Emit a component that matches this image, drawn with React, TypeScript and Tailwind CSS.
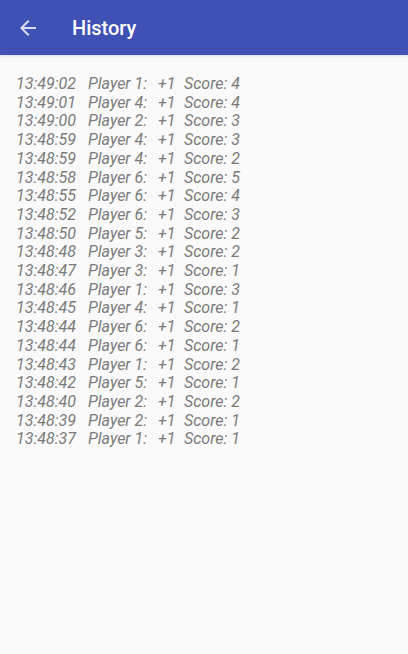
const rows: [string, number, number][] = [
  ["13:49:02", 1, 4],
  ["13:49:01", 4, 4],
  ["13:49:00", 2, 3],
  ["13:48:59", 4, 3],
  ["13:48:59", 4, 2],
  ["13:48:58", 6, 5],
  ["13:48:55", 6, 4],
  ["13:48:52", 6, 3],
  ["13:48:50", 5, 2],
  ["13:48:48", 3, 2],
  ["13:48:47", 3, 1],
  ["13:48:46", 1, 3],
  ["13:48:45", 4, 1],
  ["13:48:44", 6, 2],
  ["13:48:44", 6, 1],
  ["13:48:43", 1, 2],
  ["13:48:42", 5, 1],
  ["13:48:40", 2, 2],
  ["13:48:39", 2, 1],
  ["13:48:37", 1, 1],
];

export default function App() {
  return (
    <div className="flex h-[654px] w-[408px] flex-col bg-[#fafafa] font-['Roboto',sans-serif]">
      <header className="flex h-[55px] shrink-0 items-center bg-[#3f51b5] px-4 shadow-sm">
        <svg width="24" height="24" viewBox="0 0 24 24" className="fill-white/80">
          <path d="M20 11H7.83l5.59-5.59L12 4l-8 8 8 8 1.41-1.41L7.83 13H20v-2z" />
        </svg>
        <h1 className="ml-8 text-[20px] font-medium text-white">History</h1>
      </header>
      <main className="px-4 pt-[20px]">
        {rows.map(([time, player, score], i) => (
          <div key={i} className="flex text-base italic leading-[18.7px] text-[#7a7a7a]">
            <span className="w-[72px]">{time}</span>
            <span className="w-[70px]">Player {player}:</span>
            <span className="w-[26px]">+1</span>
            <span>Score: {score}</span>
          </div>
        ))}
      </main>
    </div>
  );
}
